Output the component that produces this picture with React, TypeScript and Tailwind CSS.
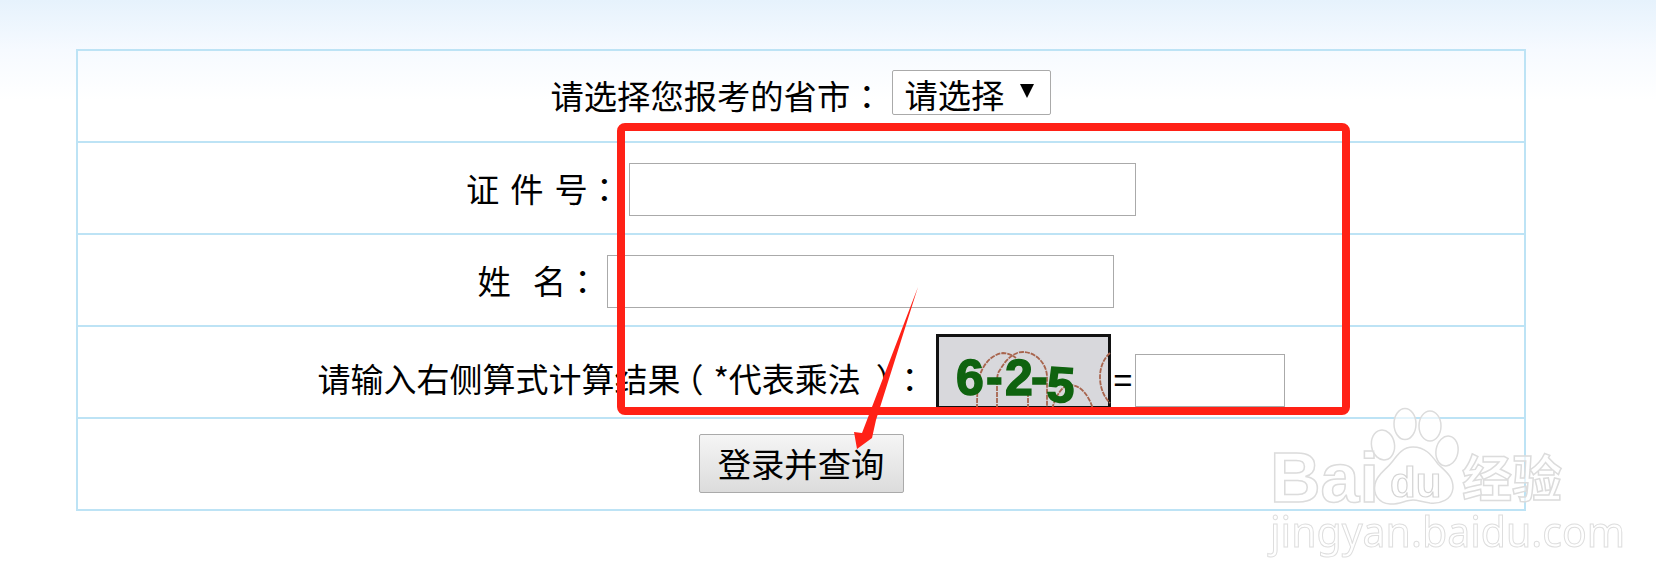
const cjk = { fontFamily: '"Noto Sans CJK SC", "Liberation Sans", sans-serif' }
const rowCls = "h-[92px] border-b-2 border-[#bde3f5] flex items-center justify-center text-[33.3px] text-black"

// TC glyphs keep full-width punctuation centred in the cell, like the reference
function P({ children }: { children: string }) {
  return <span className="font-['Noto_Sans_CJK_TC']">{children}</span>
}

function Captcha() {
  return (
    <svg width="175" height="75" viewBox="0 0 175 75" className="block shrink-0">
      <rect x="1.5" y="1.5" width="172" height="72" fill="#d8d8dc" stroke="#111" strokeWidth="3" />
      <g fill="none" stroke="#a8654e" strokeWidth="1.8" strokeDasharray="5 1">
        <path d="M41 75C41 55 42 44 46 36C50 27 58 20 67 19C72 19 76 21 80 24" />
        <path d="M61 75V48C61 42 62 38 64 36C70 25 78 18 87 18C100 18 111 30 111 43V75" />
        <path d="M92 75V56" />
        <path d="M116 75C120 62 126 51 134 51C145 51 153 62 157 75" />
        <path d="M174 19C168 24 164 33 164 43C164 54 168 63 174 69" />
      </g>
      <g className="blur-[0.4px]" fill="#0f630f" stroke="#0f630f" strokeWidth="1.5" fontFamily="Liberation Sans" fontWeight="700" fontSize="50">
        <text x="20" y="61">6</text>
        <text x="50" y="60">-</text>
        <text x="69" y="61">2</text>
        <text x="95" y="60">-</text>
        <text x="111" y="68" transform="rotate(4 125 50)">5</text>
      </g>
    </svg>
  )
}

function Watermark() {
  const outline = "absolute leading-none text-white/60 blur-[0.5px] [-webkit-text-stroke:1.5px_#dcdcdc]"
  return (
    <div className="absolute left-[1260px] top-[400px] w-[320px] h-[160px] pointer-events-none">
      <span className={outline + " left-[10px] top-[43px] text-[70px] font-bold font-['Liberation_Sans']"}>Bai</span>
      <svg width="100" height="110" viewBox="0 0 100 110" className="absolute left-[108px] top-[4px] blur-[0.5px]" fill="#ffffff99" stroke="#dcdcdc" strokeWidth="1.5">
        <ellipse cx="15" cy="41" rx="11.5" ry="15" transform="rotate(-10 15 41)" />
        <ellipse cx="37" cy="20" rx="11" ry="15.5" />
        <ellipse cx="62" cy="22" rx="11" ry="15" />
        <ellipse cx="79" cy="47" rx="11" ry="15" transform="rotate(10 79 47)" />
        <path d="M45 43C58 43 64 52 70 60C78 68 85 72 85 84C84 96 72 100 62 99C54 98 50 96 45 96C38 96 30 101 22 100C10 99 5 90 7 80C9 70 18 66 24 58C30 50 35 43 45 43Z" />
      </svg>
      <span className="absolute left-[130px] top-[62px] text-[42px] leading-none font-bold font-['Liberation_Sans'] text-white/60 blur-[0.5px] [-webkit-text-stroke:1.2px_#d4d4d4]">du</span>
      <span className={outline + " left-[202px] top-[50px] text-[50px] font-bold"} style={cjk}>经验</span>
      <span className={outline + " left-[10px] top-[111px] text-[41px] font-['Noto_Sans'] [-webkit-text-stroke:1px_#dedede]"}>jingyan.baidu.com</span>
    </div>
  )
}

export default function App() {
  return (
    <div className="relative w-[1656px] h-[585px] overflow-hidden bg-[linear-gradient(to_bottom,#e6f2fc_0px,#f6faff_50px,#ffffff_100px)]" style={cjk}>
      <div className="pt-[49px] ml-[76px] w-[1450px]">
        <div className="border-2 border-b-0 border-[#bde3f5]">
          <div className={rowCls}>
            <span className="-mt-[2px]">请选择您报考的省市<P>：</P></span>
            <div className="relative ml-[9px] -mt-[8px]">
              <select className="block appearance-none w-[159px] h-[45px] pl-[11px] pt-[3px] border border-[#aaa] rounded-[2px] bg-white text-[33.3px] leading-[40px] text-black outline-none" style={cjk}>
                <option>请选择</option>
              </select>
              <span className="absolute left-[128px] top-[14px] w-0 h-0 border-x-[7px] border-t-[14px] border-x-transparent border-t-black" />
            </div>
          </div>
          <div className={rowCls}>
            <span className="whitespace-pre [word-spacing:3.5px]">证 件 号<P>：</P></span>
            <input className="ml-[8px] mt-[3px] w-[507px] h-[53px] border border-[#aaa] bg-white" />
          </div>
          <div className={rowCls}>
            <span className="whitespace-pre [word-spacing:3.5px]">姓  名<P>：</P></span>
            <input className="ml-[8px] mr-[10px] mt-[3px] w-[507px] h-[53px] border border-[#aaa] bg-white" />
          </div>
          <div className={rowCls}>
            <span className="mt-[14px] text-[33px]">
              请输入右侧算式计算结果
              <span className="font-['Noto_Sans_CJK_TC'] -ml-[10px] mr-[10px]">（</span>
              *代表乘法
              <span className="font-['Noto_Sans_CJK_TC'] ml-[15px] mr-[1px]">）</span>
              <P>：</P>
            </span>
            <div className="ml-[10px] flex items-end -mt-[1px]">
              <Captcha />
              <span className="mx-[2px] mb-[12px] text-[33px] leading-none font-['Liberation_Sans']">=</span>
              <input className="mb-[2px] w-[150px] h-[53px] border border-[#aaa] bg-white" />
            </div>
          </div>
          <div className={rowCls}>
            <button className="-mt-[2px] w-[205px] h-[59px] border border-[#aaa] rounded-[2px] bg-gradient-to-b from-[#f5f5f5] to-[#dcdcdc] text-[33.3px] leading-none text-black">登录并查询</button>
          </div>
        </div>
      </div>

      <div className="absolute left-[617px] top-[123px] w-[733px] h-[292px] border-[8px] border-[#ff2116] rounded-[8px]" />

      <svg width="1656" height="585" className="absolute inset-0 pointer-events-none">
        <polygon points="918,287 876,420 872,438 857,449 854,432 862,433" fill="#ff2116" />
      </svg>

      <Watermark />
    </div>
  )
}
